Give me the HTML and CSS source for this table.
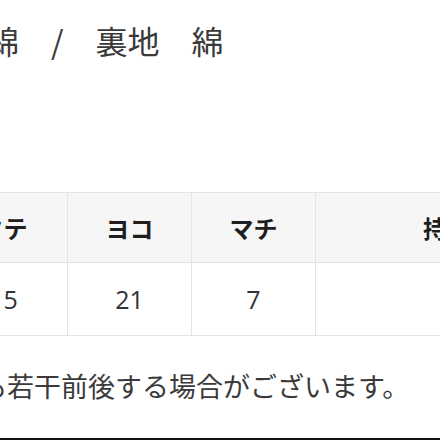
FILE: index.html
```html
<!DOCTYPE html>
<html lang="ja">
<head>
<meta charset="utf-8">
<link rel="stylesheet" href="styles.css">
</head>
<body>
<div class="page">
  <p class="material">綿　/　裏地　綿</p>
  <div class="size-table">
    <div class="cell head">タテ</div>
    <div class="cell head">ヨコ</div>
    <div class="cell head">マチ</div>
    <div class="cell head">持ち手</div>
    <div class="cell">15</div>
    <div class="cell">21</div>
    <div class="cell">7</div>
    <div class="cell"></div>
  </div>
  <p class="note">も若干前後する場合がございます。</p>
  <div class="bottom-bar"></div>
</div>
</body>
</html>
```
FILE: styles.css
```css
html, body {
  margin: 0;
  padding: 0;
  background: #ffffff;
}

.page {
  width: 440px;
  height: 440px;
  overflow: hidden;
  display: flex;
  flex-direction: column;
  font-family: "Noto Sans CJK JP", "Noto Sans", sans-serif;
  color: #3a3a3a;
}

.material {
  margin: 20px 0 0 -13px;
  font-size: 32px;
  line-height: 40px;
  font-weight: 400;
  white-space: nowrap;
}

.size-table {
  margin: 132px 0 0 -60px;
  display: grid;
  grid-template-columns: 128px 124px 124px 287px;
  grid-template-rows: 70px 73px;
  border-top: 1px solid #e4e4e4;
  width: 663px;
  flex: none;
}

.cell {
  box-sizing: border-box;
  border-right: 1px solid #e4e4e4;
  border-bottom: 1px solid #e4e4e4;
  display: flex;
  align-items: center;
  justify-content: center;
  font-family: "Open Sans", "Noto Sans CJK JP", sans-serif;
  font-size: 25px;
  color: #333333;
  background: #ffffff;
}

.cell.head {
  background: #f6f6f6;
  font-family: "Noto Sans CJK JP", sans-serif;
  font-size: 24px;
  font-weight: 700;
  color: #1e1e1e;
}

.note {
  margin: 33px 0 0 -20px;
  font-size: 27px;
  line-height: 34px;
  white-space: nowrap;
}

.bottom-bar {
  margin-top: auto;
  height: 2px;
  background: #111111;
  flex: none;
}
```
